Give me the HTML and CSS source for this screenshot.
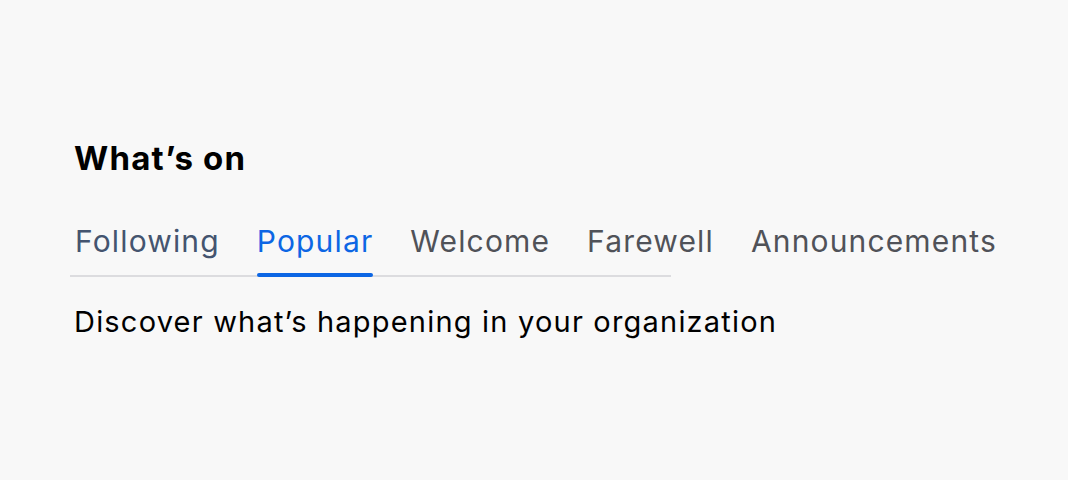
FILE: index.html
```html
<!DOCTYPE html>
<html lang="en">
<head>
<meta charset="utf-8">
<title>What's on</title>
<link rel="stylesheet" href="styles.css">
</head>
<body>
<main class="page">
  <h2 class="title">What’s on</h2>
  <nav class="tabs" role="tablist">
    <a class="tab tab-hover" role="tab">Following</a>
    <a class="tab tab-active" role="tab" aria-selected="true">Popular</a>
    <a class="tab" role="tab">Welcome</a>
    <a class="tab" role="tab">Farewell</a>
    <a class="tab" role="tab">Announcements</a>
  </nav>
  <p class="desc">Discover what’s happening in your organization</p>
</main>
</body>
</html>
```
FILE: styles.css
```css
html, body {
  margin: 0;
  padding: 0;
  background: #f8f8f8;
}
body {
  font-family: Inter, "Noto Sans", sans-serif;
  color: #000;
}
.page {
  padding: 136px 0 0 74px;
}
.title {
  margin: 0;
  font-size: 33px;
  font-weight: 700;
  line-height: 44px;
  letter-spacing: 1.2px;
  color: #000;
}
.tabs {
  margin: 43px 0 0 -4px;
  width: 596px;
  padding-left: 5px;
  display: flex;
  gap: 37px;
  white-space: nowrap;
  box-shadow: inset 0 -2px 0 #dcdcdf;
}
.tab {
  position: relative;
  font-size: 30px;
  line-height: 36px;
  letter-spacing: 1.15px;
  padding: 0 0 18px;
  color: #505258;
  cursor: pointer;
}
.tab-hover {
  color: #44546f;
}
.tab-active {
  color: #0c66e4;
}
.tab-active::after {
  content: "";
  position: absolute;
  left: 0;
  right: 0;
  bottom: 0;
  height: 4px;
  border-radius: 2px;
  background: #0c66e4;
}
.desc {
  margin: 25px 0 0;
  font-size: 29px;
  line-height: 40px;
  letter-spacing: 1.2px;
  color: #000;
}
```
